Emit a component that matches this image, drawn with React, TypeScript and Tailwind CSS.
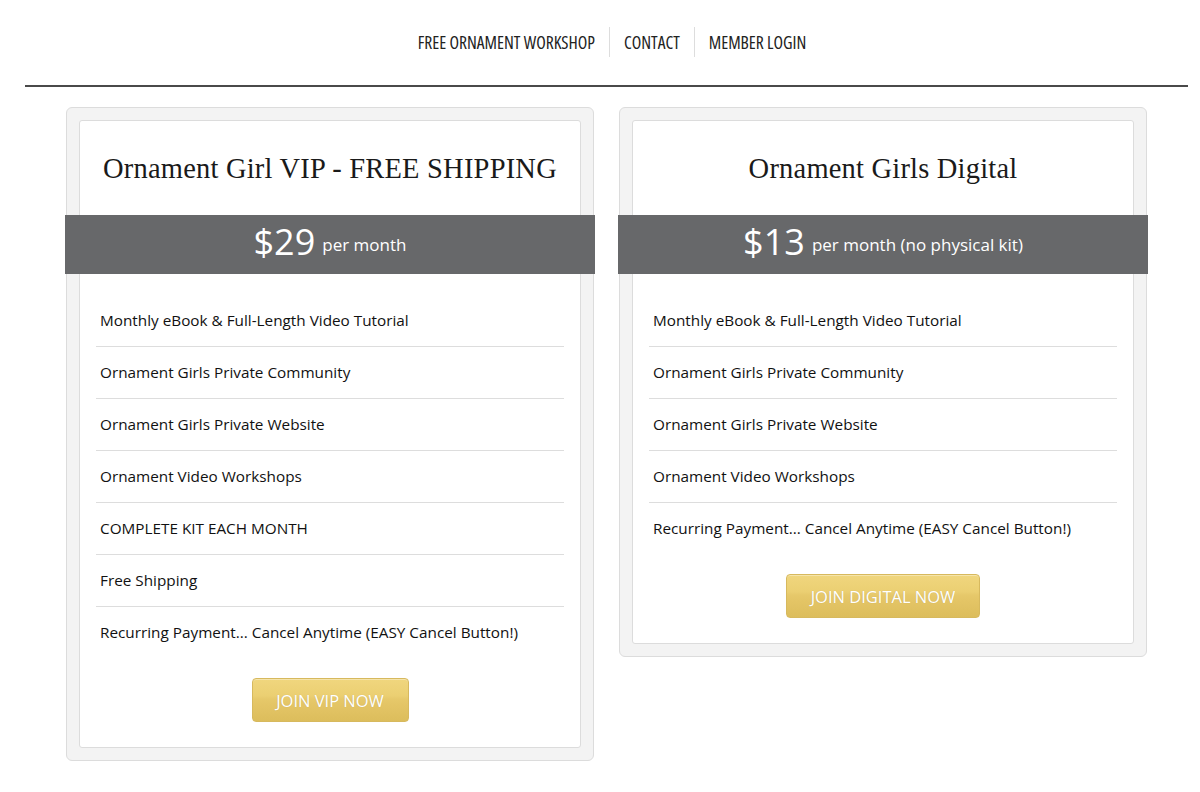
import React from "react";

const sans = { fontFamily: '"Open Sans", "Liberation Sans", sans-serif' };

function Button({ label, width }: { label: string; width: string }) {
  return (
    <div
      className={`${width} h-[44px] rounded-[4px] border border-[#d7b95e] flex items-center justify-center pt-[3px] text-white text-[16.5px] uppercase bg-[linear-gradient(to_bottom,#f0d67e_0%,#ebcf72_40%,#e6c86a_48%,#e4c566_60%,#dcbd5c_100%)] shadow-[inset_0_1px_0_rgba(255,255,255,0.35)] [text-shadow:0_0_1px_rgba(0,0,0,0.15)]`}
      style={sans}
    >
      {label}
    </div>
  );
}

function Card({
  title,
  price,
  suffix,
  items,
  button,
  buttonWidth,
  width,
}: {
  title: string;
  price: string;
  suffix: string;
  items: string[];
  button: string;
  buttonWidth: string;
  width: string;
}) {
  return (
    <div className={`${width} bg-[#f3f3f3] border border-[#dcdcdc] rounded-[6px] p-[12px] self-start`}>
      <div className="bg-white border border-[#dcdcdc] rounded-[3px] flex flex-col">
        <div className="h-[94px] flex items-center justify-center pt-[3px]">
          <h2
            className="text-[28.5px] text-[#1a1a1a] tracking-[0.2px]"
            style={{ fontFamily: '"Liberation Serif", "DejaVu Serif", serif' }}
          >
            {title}
          </h2>
        </div>
        <div className="-mx-[15px] h-[59px] bg-[#67686a] flex items-center justify-center text-white pb-[4px]" style={sans}>
          <span className="text-[36px] leading-none">{price}</span>
          <span className="text-[17px] ml-[7px] mt-[6px]">{suffix}</span>
        </div>
        <ul className="mx-[16px] mt-[21px]" style={sans}>
          {items.map((it, i) => (
            <li
              key={i}
              className={`h-[52px] flex items-center pl-[4px] text-[15.3px] text-[#111] ${
                i < items.length - 1 ? "border-b border-[#dddddd]" : ""
              }`}
            >
              {it}
            </li>
          ))}
        </ul>
        <div className="flex justify-center mt-[19px] mb-[25px]">
          <Button label={button} width={buttonWidth} />
        </div>
      </div>
    </div>
  );
}

export default function App() {
  const nav = ["FREE ORNAMENT WORKSHOP", "CONTACT", "MEMBER LOGIN"];
  return (
    <div className="w-[1200px] min-h-[792px] bg-white">
      <nav className="h-[85px] flex items-start justify-center pt-[27px] pl-[24px]">
        {nav.map((n, i) => (
          <div
            key={n}
            className={`h-[30px] flex items-center px-[14px] text-[17.5px] text-[#222] ${
              i > 0 ? "border-l border-[#dddddd]" : ""
            }`}
            style={{
              fontFamily: '"Open Sans", "Liberation Sans", sans-serif',
              fontStretch: "75%",
              fontWeight: 400,
            }}
          >
            {n}
          </div>
        ))}
      </nav>
      <div className="ml-[25px] w-[1163px] h-[1.5px] bg-[#4a4a4a]" />
      <div className="flex ml-[66px] gap-[25px] mt-[20px] items-start">
        <Card
          width="w-[528px]"
          title="Ornament Girl VIP - FREE SHIPPING"
          price="$29"
          suffix="per month"
          items={[
            "Monthly eBook & Full-Length Video Tutorial",
            "Ornament Girls Private Community",
            "Ornament Girls Private Website",
            "Ornament Video Workshops",
            "COMPLETE KIT EACH MONTH",
            "Free Shipping",
            "Recurring Payment... Cancel Anytime (EASY Cancel Button!)",
          ]}
          button="Join VIP Now"
          buttonWidth="w-[157px]"
        />
        <Card
          width="w-[528px]"
          title="Ornament Girls Digital"
          price="$13"
          suffix="per month (no physical kit)"
          items={[
            "Monthly eBook & Full-Length Video Tutorial",
            "Ornament Girls Private Community",
            "Ornament Girls Private Website",
            "Ornament Video Workshops",
            "Recurring Payment... Cancel Anytime (EASY Cancel Button!)",
          ]}
          button="Join Digital Now"
          buttonWidth="w-[194px]"
        />
      </div>
    </div>
  );
}
